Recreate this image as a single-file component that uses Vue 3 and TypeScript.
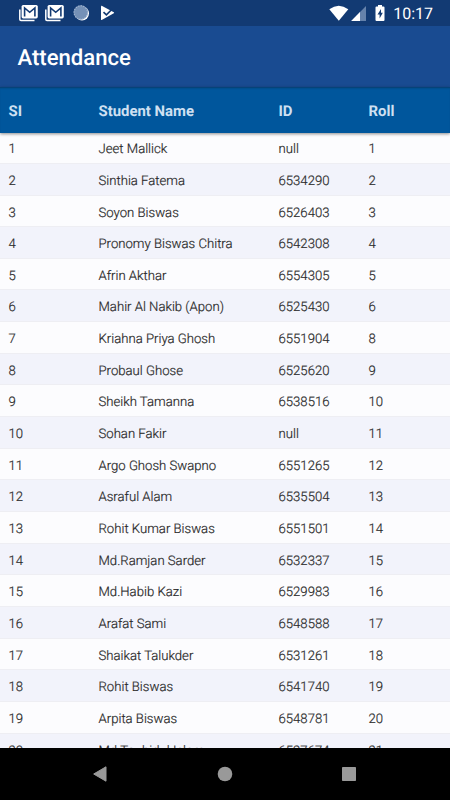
<script setup lang="ts">
interface Student {
  name: string
  id: string
  roll: number
}

const names: [string, string][] = [
  ['Jeet Mallick', 'null'],
  ['Sinthia Fatema', '6534290'],
  ['Soyon Biswas', '6526403'],
  ['Pronomy Biswas Chitra', '6542308'],
  ['Afrin Akthar', '6554305'],
  ['Mahir Al Nakib (Apon)', '6525430'],
  ['Kriahna Priya Ghosh', '6551904'],
  ['Probaul Ghose', '6525620'],
  ['Sheikh Tamanna', '6538516'],
  ['Sohan Fakir', 'null'],
  ['Argo Ghosh Swapno', '6551265'],
  ['Asraful Alam', '6535504'],
  ['Rohit Kumar Biswas', '6551501'],
  ['Md.Ramjan Sarder', '6532337'],
  ['Md.Habib Kazi', '6529983'],
  ['Arafat Sami', '6548588'],
  ['Shaikat Talukder', '6531261'],
  ['Rohit Biswas', '6541740'],
  ['Arpita Biswas', '6548781'],
  ['Md.Touhidul Islam', '6527674'],
]

// Roll number 7 is unassigned.
const students: Student[] = names.map(([name, id], i) => ({
  name,
  id,
  roll: i < 6 ? i + 1 : i + 2,
}))
</script>

<template>
  <div class="screen">
    <div class="status">
      <div class="notifications">
        <svg v-for="n in 2" :key="n" class="mail" width="20" height="17" viewBox="0 0 20 17">
          <path d="M1.8 4.5V14.2Q1.8 15.4 3 15.4H16.5" fill="none" stroke="#fff" stroke-width="1.5" />
          <rect x="3.6" y="0" width="16.2" height="13.4" rx="1.6" fill="#fff" />
          <path d="M6.6 11.6V3L11.7 7.3L16.9 3V11.6" fill="none" stroke="#123a73" stroke-width="1.6" />
        </svg>
        <svg class="sync" width="17" height="17" viewBox="0 0 17 17">
          <circle cx="9" cy="8.5" r="7" fill="#fff" />
          <circle cx="7.8" cy="7.5" r="7.2" fill="#7591b7" />
          <circle cx="7.8" cy="7.5" r="6.7" fill="none" stroke="#a3b6d0" stroke-width="1.1" stroke-dasharray="1.3 1.3" />
        </svg>
        <svg class="play" width="15" height="17" viewBox="0 0 15 17">
          <path d="M1 1.2Q1 .5 1.7.8L13.8 7.2Q14.5 7.8 13.8 8.3L1.7 15Q1 15.3 1 14.6Z" fill="#fff" />
          <path d="M3.5 7.1L6.4 9.8L12.5 3.7" fill="none" stroke="#123a73" stroke-width="1.6" />
        </svg>
      </div>
      <div class="system">
        <svg width="20" height="17" viewBox="0 0 20 17">
          <path d="M.3 4.3Q9.7-3 19.3 4.3L9.8 15.8Z" fill="#fff" />
        </svg>
        <svg class="signal" width="16" height="17" viewBox="0 0 16 17">
          <path d="M15 1V16H.2Z" fill="#6582ab" />
          <path d="M9 7.1V16H.2Z" fill="#fff" />
        </svg>
        <svg class="battery" width="10" height="17" viewBox="0 0 10 17">
          <path d="M3 0H7V1.6H8.5Q9.5 1.6 9.5 2.6V15Q9.5 16 8.5 16H1.5Q.5 16 .5 15V2.6Q.5 1.6 1.5 1.6H3Z" fill="#fff" />
          <path d="M6 4L2.5 9.6H4.6V13.4L7.8 7.8H6Z" fill="#123a73" />
        </svg>
        <span class="clock">10:17</span>
      </div>
    </div>
    <header class="appbar">Attendance</header>
    <div class="row head">
      <span>SI</span><span>Student Name</span><span>ID</span><span>Roll</span>
    </div>
    <main class="list">
      <div v-for="(s, i) in students" :key="i" class="row item">
        <span>{{ i + 1 }}</span><span>{{ s.name }}</span><span>{{ s.id }}</span><span>{{ s.roll }}</span>
      </div>
    </main>
    <nav class="nav">
      <svg width="14" height="16" viewBox="0 0 14 16"><path d="M13 .8V15.2L.7 8Z" fill="#999" stroke="#999" stroke-linejoin="round" /></svg>
      <svg width="16" height="16" viewBox="0 0 16 16"><circle cx="8" cy="8" r="7.3" fill="#999" /></svg>
      <svg width="14" height="16" viewBox="0 0 14 16"><rect y="1" width="14" height="14" rx=".7" fill="#999" /></svg>
    </nav>
  </div>
</template>

<style>
body {
  margin: 0;
  overflow: hidden;
}
</style>

<style scoped>
.screen {
  display: flex;
  flex-direction: column;
  width: 450px;
  height: 800px;
  overflow: hidden;
  background: #fcfcfe;
  font-family: Roboto, sans-serif;
  text-rendering: geometricPrecision;
}
.status {
  display: flex;
  flex: none;
  justify-content: space-between;
  height: 26px;
  padding: 5px 17px 0 18px;
  box-sizing: border-box;
  background: #123a73;
}
.notifications,
.system {
  display: flex;
  align-items: flex-start;
}
.mail {
  margin-right: 6px;
}
.sync {
  margin-left: 3px;
}
.play {
  margin-left: 10px;
}
.signal {
  margin-left: 2px;
}
.battery {
  margin-left: 8px;
}
.clock {
  margin-left: 8px;
  color: #fff;
  font-size: 16px;
  line-height: 18px;
}
.appbar {
  flex: none;
  height: 61px;
  padding-left: 17.5px;
  background: #194b91;
  color: #fff;
  font-size: 22.1px;
  font-weight: 500;
  line-height: 65px;
}
.row {
  display: grid;
  grid-template-columns: 90px 180px 90px 1fr;
  padding-left: 8.5px;
  box-sizing: border-box;
}
.head {
  z-index: 1;
  flex: none;
  height: 46px;
  background: #00569c;
  box-shadow: inset 0 2px 2px -1px #073e6d, 0 1px 3px rgba(0, 0, 0, 0.45);
  color: #cfe0f2;
  font-size: 14.9px;
  font-weight: 700;
  line-height: 49px;
}
.list {
  flex: 1;
  min-height: 0;
  margin-top: -0.8px;
  overflow: hidden;
}
.item {
  height: 31.67px;
  border-bottom: 1px solid #eeeef3;
  color: #2b2b2b;
  font-size: 13.15px;
  font-weight: 300;
  line-height: 36.8px;
  -webkit-text-stroke: 0.2px #2b2b2b;
}
.item:nth-child(even) {
  background: #f2f3fb;
}
.nav {
  display: flex;
  flex: none;
  align-items: center;
  justify-content: space-between;
  height: 52px;
  padding: 0 94px 0 93px;
  box-sizing: border-box;
  background: #000;
}
</style>
